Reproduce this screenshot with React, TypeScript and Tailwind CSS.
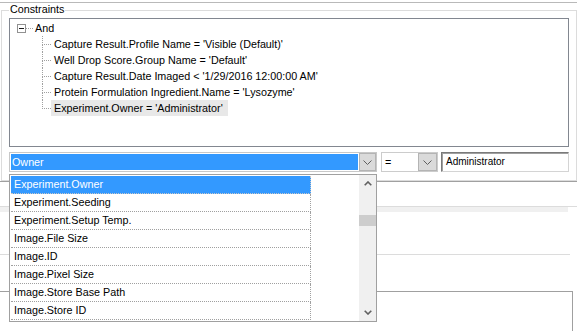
import React from "react";

const ChevronDown = ({ className = "" }: { className?: string }) => (
  <svg width="9" height="5" viewBox="0 0 9 5" className={className}>
    <path d="M0.5 0.5 L4.5 4.5 L8.5 0.5" fill="none" stroke="#606060" strokeWidth="1" />
  </svg>
);

const ScrollUp = () => (
  <svg width="8" height="5" viewBox="0 0 8 5">
    <path d="M0.7 4.3 L4 1 L7.3 4.3" fill="none" stroke="#606060" strokeWidth="1.6" />
  </svg>
);

const ScrollDown = () => (
  <svg width="8" height="5" viewBox="0 0 8 5">
    <path d="M0.7 0.7 L4 4 L7.3 0.7" fill="none" stroke="#606060" strokeWidth="1.6" />
  </svg>
);

const children = [
  "Capture Result.Profile Name = 'Visible (Default)'",
  "Well Drop Score.Group Name = 'Default'",
  "Capture Result.Date Imaged < '1/29/2016 12:00:00 AM'",
  "Protein Formulation Ingredient.Name = 'Lysozyme'",
  "Experiment.Owner = 'Administrator'",
];

const items = [
  "Experiment.Owner",
  "Experiment.Seeding",
  "Experiment.Setup Temp.",
  "Image.File Size",
  "Image.ID",
  "Image.Pixel Size",
  "Image.Store Base Path",
  "Image.Store ID",
];

export default function App() {
  return (
    <div className="relative w-[577px] h-[331px] overflow-hidden bg-white text-black font-['Liberation_Sans',Arial,sans-serif] flex flex-col">
      <div className="h-[2px] shrink-0" />
      <div className="h-px shrink-0 bg-[#b9b9b9]" />
      <div className="h-[7px] shrink-0" />

      {/* Group box */}
      <div className="relative ml-[1px] w-[576px] h-[171px] shrink-0 border border-[#dcdcdc] pl-[7px] pt-[7px]">
        <span className="absolute left-[7px] top-[-8px] bg-white px-[1px] text-[10.75px] leading-[13px]">
          Constraints
        </span>

        {/* Tree */}
        <div className="w-[560px] h-[129px] border border-[#828790] bg-white pt-[1px] text-[10.75px] leading-[16px]">
          <div className="flex items-center h-[16px] pl-[7px]">
            <svg width="9" height="9" viewBox="0 0 9 9" className="shrink-0">
              <rect x="0.5" y="0.5" width="8" height="8" fill="#fff" stroke="#919191" />
              <line x1="2" y1="4.5" x2="7" y2="4.5" stroke="#1a1a1a" />
            </svg>
            <div className="w-[7px] h-0 border-t border-dotted border-[#a0a0a0]" />
            <span className="ml-[2px]">And</span>
          </div>
          {children.map((c, i) => {
            const last = i === children.length - 1;
            return (
              <div key={i} className="flex h-[16px]">
                <div className="w-[32px] shrink-0" />
                <div className="w-[9px] shrink-0 flex flex-col">
                  <div className="h-[9px] border-l border-b border-dotted border-[#a0a0a0]" />
                  <div className={"h-[7px] " + (last ? "" : "border-l border-dotted border-[#a0a0a0]")} />
                </div>
                <span className={"px-[3px] whitespace-nowrap " + (last ? "bg-[#e8e8e8] pr-[5px]" : "")}>{c}</span>
              </div>
            );
          })}
        </div>

        {/* Combo row */}
        <div className="flex mt-[5px] h-[20px] text-[10.75px]">
          <div className="w-[368px] h-[20px] border border-[#c8c8c8] flex">
            <div className="flex-1 m-[1px] bg-[#3399ff] text-white leading-[16px] pl-[1px]">Owner</div>
            <div className="w-[17px] h-[18px] bg-[#dadada] border border-[#b4b4b4] flex items-center justify-center">
              <ChevronDown />
            </div>
          </div>
          <div className="ml-[4px] w-[57px] h-[20px] border border-[#cccccc] flex">
            <div className="flex-1 leading-[18px] pl-[3px]">=</div>
            <div className="w-[19px] h-[18px] bg-[#dadada] border border-[#b4b4b4] flex items-center justify-center">
              <ChevronDown />
            </div>
          </div>
          <div className="ml-[3px] w-[128px] h-[20px] border border-t-[#7a7a7a] border-l-[#7a7a7a] border-r-[#d4d4d4] border-b-[#d4d4d4] shadow-[inset_1px_1px_0_#a0a0a0] text-[10px] leading-[18px] pl-[4px]">
            Administrator
          </div>
        </div>
      </div>

      <div className="h-px shrink-0 bg-[#a0a0a0]" />
      <div className="h-[24px] shrink-0" />
      <div className="h-px shrink-0 bg-[#dcdcdc]" />
      <div className="h-[5px] w-[568px] shrink-0 bg-[#f0f0f0]" />
      <div className="h-[42px] shrink-0" />
      <div className="h-px w-[570px] shrink-0 bg-[#dcdcdc]" />
      <div className="h-[36px] shrink-0" />
      <div className="flex-1 w-[573px] border-t border-r border-[#a0a0a0]" />

      {/* Dropdown list */}
      <div className="absolute left-[9px] top-[174px] w-[368px] h-[148px] border border-[#a0a0a0] bg-white flex text-[10.75px]">
        <div className="pl-[1px] pt-[1px] flex flex-col">
          {items.map((it, i) => (
            <div
              key={i}
              className={
                "w-[300px] h-[18px] border-b border-r border-dotted pl-[3px] leading-[17px] whitespace-nowrap " +
                (i === 0 ? "bg-[#3399ff] text-white border-[#c8c8c8]" : "border-[#a0a0a0]")
              }
            >
              {it}
            </div>
          ))}
        </div>
        <div className="ml-auto w-[17px] self-stretch bg-[#f0f0f0] flex flex-col">
          <div className="h-[17px] shrink-0 flex items-center justify-center">
            <ScrollUp />
          </div>
          <div className="h-[23px] shrink-0" />
          <div className="h-[11px] shrink-0 bg-[#cdcdcd]" />
          <div className="flex-1" />
          <div className="h-[17px] shrink-0 flex items-center justify-center">
            <ScrollDown />
          </div>
        </div>
      </div>
    </div>
  );
}
